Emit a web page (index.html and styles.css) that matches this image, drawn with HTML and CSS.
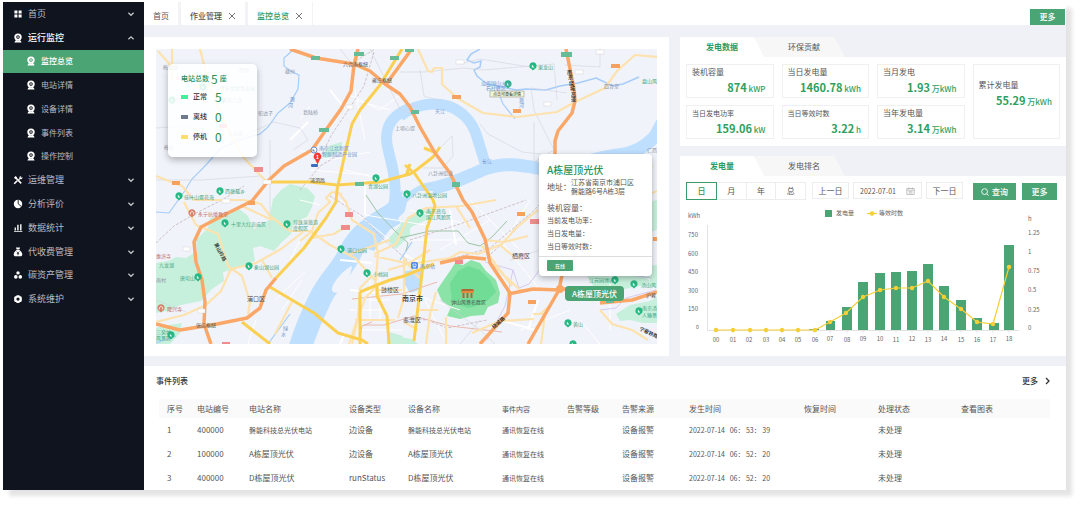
FILE: index.html
```html
<!DOCTYPE html>
<html lang="zh-CN">
<head>
<meta charset="utf-8">
<meta name="viewport" content="width=device-width, initial-scale=1">
<title>监控总览</title>
<link rel="stylesheet" href="styles.css">
</head>
<body>
<svg class="defs" aria-hidden="true">
  <symbol id="cam" viewBox="0 0 10 10"><path fill="currentColor" fill-rule="evenodd" d="M5 .4a3.7 3.7 0 1 1 0 7.4A3.7 3.7 0 0 1 5 .4zM5 2.3a1.8 1.8 0 1 0 0 3.6 1.8 1.8 0 0 0 0-3.6zM2.4 7.4h5.2l1 2.2H1.4z"/><circle cx="5" cy="4.1" r=".8" fill="currentColor"/></symbol>
  <symbol id="down" viewBox="0 0 8 8"><path d="M1.4 2.8 4 5.3l2.6-2.5" fill="none" stroke="currentColor" stroke-width="1.2"/></symbol>
  <symbol id="up" viewBox="0 0 8 8"><path d="M1.4 5.3 4 2.8l2.6 2.5" fill="none" stroke="currentColor" stroke-width="1.2"/></symbol>
  <symbol id="close" viewBox="0 0 8 8"><path d="M1 1l6 6M7 1 1 7" fill="none" stroke="currentColor" stroke-width="1"/></symbol>
  <symbol id="poi" viewBox="0 0 8 9"><path d="M4 .3a3.6 3.6 0 0 1 1.6 6.8L4 8.6 2.4 7.1A3.6 3.6 0 0 1 4 .3z" fill="#25b882"/><path d="M2.9 5.6V2.5l2.3 3.1z" fill="#fff"/></symbol>
  <symbol id="poi-red" viewBox="0 0 8 9"><path d="M4 .3a3.6 3.6 0 0 1 1.6 6.8L4 8.6 2.4 7.1A3.6 3.6 0 0 1 4 .3z" fill="#d9806b"/><path d="M2.4 5.5V3.6L4 2.3l1.6 1.3v1.9" fill="none" stroke="#fff" stroke-width=".8"/></symbol>
</svg>

<div class="app">
  <aside class="sidebar">
    <nav class="nav">
      <a class="item" href="#"><svg class="ico"><path fill="currentColor" d="M1.4 1.4h3v3h-3zM5.6 1.4h3v3h-3zM1.4 5.6h3v3h-3zM5.6 5.6h3v3h-3z"/></svg>首页<svg class="chev"><use href="#down"/></svg></a>
      <a class="item open" href="#"><svg class="ico"><use href="#cam"/></svg>运行监控<svg class="chev"><use href="#up"/></svg></a>
      <a class="item sub active" href="#"><svg class="ico"><use href="#cam"/></svg>监控总览</a>
      <a class="item sub" href="#"><svg class="ico"><use href="#cam"/></svg>电站详情</a>
      <a class="item sub" href="#"><svg class="ico"><use href="#cam"/></svg>设备详情</a>
      <a class="item sub" href="#"><svg class="ico"><use href="#cam"/></svg>事件列表</a>
      <a class="item sub" href="#"><svg class="ico"><use href="#cam"/></svg>操作控制</a>
      <a class="item" href="#"><svg class="ico"><path d="M2.2 2.2l6 6.2M1.2 8.8l3-3" fill="none" stroke="currentColor" stroke-width="1.6"/><path fill="currentColor" d="M1 2.8 2.6.9l1.6 1.6-1.6 1.7zM5.2 4.6l1.3-1.3a1.8 1.8 0 0 1 1.9-2.4L7.5 2l.7.8 1.2-.9a1.8 1.8 0 0 1-2.3 2.2L5.9 5.4z"/></svg>运维管理<svg class="chev"><use href="#down"/></svg></a>
      <a class="item" href="#"><svg class="ico"><circle cx="5" cy="5" r="4.2" fill="currentColor"/><path d="M5.2.6v4.2l3 2.6" fill="none" stroke="#10141f" stroke-width=".9"/></svg>分析评价<svg class="chev"><use href="#down"/></svg></a>
      <a class="item" href="#"><svg class="ico"><path fill="currentColor" d="M1 8.2h8.4V9H1zM1.6 4.6h1.3v3H1.6zM4.2 1.8h1.4v5.8H4.2zM7.1 1.2h1.4v6.4H7.1z"/></svg>数据统计<svg class="chev"><use href="#down"/></svg></a>
      <a class="item" href="#"><svg class="ico"><path fill="currentColor" d="M3 .6h4L6.4 2.6h-2.8zM3.6 3h2.8C8 4 9.3 5.8 9.3 7.4 9.3 8.600 8.600 9.200 7.400 9.200H2.600C1.400 9.200.7 8.600.7 7.400.7 5.800 2 4 3.600 3z"/><path d="M3.700 4.500 5 6l1.300-1.500M5 6v2.300M3.800 6.600h2.400" fill="none" stroke="#10141f" stroke-width=".7"/></svg>代收费管理<svg class="chev"><use href="#down"/></svg></a>
      <a class="item" href="#"><svg class="ico"><g fill="currentColor"><circle cx="5" cy="2.900" r="1.700"/><circle cx="2.800" cy="6.900" r="1.800"/><circle cx="7.300" cy="6.900" r="1.800"/></g></svg>碳资产管理<svg class="chev"><use href="#down"/></svg></a>
      <a class="item" href="#"><svg class="ico"><path fill="currentColor" fill-rule="evenodd" d="M3.700 1.200h2.600l.6 1 1.200.1 1 2-.6.800.6.900-1 2-1.200.1-.6 1H3.700l-.6-1-1.200-.1-1-2 .6-.9-.6-.8 1-2 1.200-.1zM5 3.500a1.600 1.600 0 1 0 0 3.200 1.600 1.600 0 0 0 0-3.200z"/></svg>系统维护<svg class="chev"><use href="#down"/></svg></a>
    </nav>
  </aside>

  <main class="main">
    <header class="topbar">
      <a class="tab" href="#">首页</a>
      <a class="tab" href="#">作业管理<svg class="x"><use href="#close"/></svg></a>
      <a class="tab current" href="#">监控总览<svg class="x"><use href="#close"/></svg></a>
      <button class="btn more-top" type="button">更多</button>
    </header>

    <div class="board">
      <section class="panel map-panel">
        <div class="map">
          <svg class="map-svg" viewBox="156 49 501 295" role="img" aria-label="南京市地图">
            <rect x="156" y="49" width="501" height="295" fill="#f0f3fa"/>
            <g fill="#c7f0dc">
              <path d="M273 199l8-9 9-6 17 4 8 8-3 11-5 10-13 5-3 12-9 8-8 9-14-5-7 2 2 13-20 8-12 3 1 9-12 8-11 12-20 4-14 6-11 2v-50l12-2 8-4 10 1 11-7-1-11 12-12 2-10 16-3 12-7 10 8 6 13 15-9z"/>
              <path d="M162 326l20-3-2 10-10 11h-14v-16zM323 153l8-8 11-3v5l-3 5-10 5-7 2zM387 240l12-13 11-8v16l-14 14zM395 240l8-22 13-8 16 1-3 8-16 7-11 9zM587 276l14-4 30-4 26-3v22l-20-1-20 5-22-2zM616 314l14-9 20-4 7-4v26l-14 0-13-3-10 1zM600 220l30-14 27-6v30l-30 8zM400 337l12 2 6 5h-20zM389 332l14 4-2 8h-14z"/>
            </g>
            <g fill="none" stroke="#bfdfff">
              <path d="M410 108C395 114 384 124 387 144c2 12 7 24 8 42 1 13-1 21-4 28" stroke-width="11"/>
              <path d="M400 116c16-12 33-14 48-10 15 5 25 17 29 31l8 26" stroke-width="11"/>
              <path d="M657 134c-10 12-24 20-40 21-28 4-55 15-80 13-17-3-34-6-52 1-20 8-36 17-60 21-12 5-22 14-33 25" stroke-width="13"/>
              <path d="M395 213c-17 10-35 20-44 38-9 20-22 29-31 48-8 16-14 30-20 49" stroke-width="23"/>
            </g>
            <path d="M640 151l17-32v22zM403 190c-16 14-22 20-37 32l-8 24 16 5 25-34zM405 271l16-2 2 10-4 11-9 3-6-10z" fill="#bfdfff"/>
            <path d="M352 266c-9 4-20 17-20 24 2 5 8 2 11-3 5-5 8-14 9-21zM407 202l12-11 14 0-2 14-15 8-14 10z" fill="#f0f3fa"/>
            <path d="M437 290l6-9 7-10 5-8 8 2 8-5 9 3 6 8 10 9 4 13-2 10-10 4-4 8-13 1-11 3-13-3 4-9-9-6z" fill="#8be3a8"/>
            <path d="M450 283l8-12 10-5 12 4 10 10 6 12-12 12-16 4-16-6z" fill="#62d98a" opacity=".65"/>
            <g fill="none" stroke="#a6cdfa" stroke-width="1.200">
              <path d="M293 50l-9 8 0 8 8 6 7 3-1 14-8 14-12 10-10 14-8 7-20 6-20 9-14 16-14 14-8 13-15 21-13-1"/>
              <path d="M480 49l-9 5-4 6 7 3 7-2-1 6-6 3 3 6 10 8 15 3 14 3 10-1 20 1 14-4 18-3 18-5 17 8 10-2 16-7" stroke-width="1.500"/>
              <path d="M495 84l8 20 12 15M156 343l20-7M400 260l12-18M268 344l22-30"/>
            </g>
            <g fill="none" stroke="#fff" stroke-width="1">
              <path d="M300 150l30 10 40-8M310 170l60 5M350 95l30 15 20-15M360 110l25-30M365 140l-10-50M355 100l35 10M300 200l20 5M275 300l30-28M282 310l20-30M290 260l10-20M340 200l50 40M365 215l60 10M345 170l40 10M410 210l60 15M410 240l60 0M400 290l60 20M425 300l20 40M440 250l50-30M500 240l40 50M470 200l60 60M530 200l-25 40M300 120l10-14M256 320l-8 24M370 300l20 0M350 310l36 0M370 280v40M380 270v50M358 330l45 0M520 330l50-20M570 220l80 60M580 320l20 24M610 250l0 80"/>
              <path d="M290 140l18-18M330 90l16 20M365 180v35M450 210l6 35M405 255l20 10M340 260l32 3M350 290l30 3M345 333l-5 11M500 320l35 10M538 300l-10 30" stroke-width="2"/>
            </g>
            <g fill="none" stroke="#d4d4de" stroke-width=".6">
              <path d="M156 128l30-2 20 8M225 147l12-8 15-7 22-10 26 6 8 12-15 10M400 72l24 0 40-4 20 2 70-6 3 36M534 122v40l20-12-20-40-3-22 36 5M340 49l12 15M460 64l20-5 50 8M370 49l30 60 17 8M440 148l12-12 1 20-10 12-20 0M600 49v18l-35-2M420 70l4 26 16 5M480 124l8 10 34 18 36 4M270 140l0 90M156 180l45 0 60-4M440 300l40 30 15 14M460 344l20-24M510 260l30-10M156 300l30 12"/>
            </g>
            <g fill="none" stroke="#c9b4b9" stroke-width=".8" stroke-dasharray="3 1.500">
              <path d="M352 63l23-14M374 52l-10 34-17 26-15 22-12 24M156 243l18-17 24-14 24-12 22-14M300 190l20-24 24-14M410 240l50-16 66-24M440 262l50-14 40-34M484 260l20-18 36-38M330 196l32 20 20 22 25 22M405 318l22 2 20 8 40-8"/>
            </g>
            <path d="M366 195l12 18 17 18 13 12-2 8M400 238l30-7 28 0 10 12 12 3 12-9 15-16" fill="none" stroke="#9ec3a4" stroke-width="1"/>
            <path d="M485 262l28 8 6 18 10-4 12-16 30-2 80 12M600 310l16-2 10-10 30-8M513 270l-8 36-18 34" fill="none" stroke="#cfc0ef" stroke-width=".8"/>
            <path d="M364 325l20 0 30-9 36 10 52 6M372 322l-10 4-2 10M352 299l30-3 20-2 35-12" fill="none" stroke="#eab2a4" stroke-width=".9"/>
            <g fill="none" stroke="#fde2ae" stroke-width="2.200" stroke-linejoin="round">
              <path d="M200 49l9 36 16 38 18 34 20 21 5 4M158 51l14 16v14M172 49v30M156 176l26 10 12 14 50 0 17 4 9 12 20 15 20 0 20 14 25 13 20 22 5 20M184 202l12 23 22 9 10 32 14 10 8 26-2 12M156 322l28-7 22-10 15-14 10-22 25-6 25-14 22-17M300 241l12-10 6-18 12-11-4-4 6-6 10 2M242 206l30 14M418 49l10 22 4 1 2-4 8 0v16l15 14 26 15 34 4 40-5 18-10 30-14 12-17 18-16 24 2M336 190l10 12 6 18 22 14 4 20-3 34-10 10-10 28-8 24M312 238l22-4 14-9M374 254l22-10 12-26 18-10 36-2 34-6M374 256l36 8 40-6 10-6 18 2 24-10 14-16 22-18M490 262l30 28 18 0M350 254l40-14M372 276l-12 12-2 30-6 26M355 320h40M388 270l20-6 22-14M436 292l-6 22-4 30M446 317v27M420 310l18 0M404 258l0 40-6 20M378 290h24M484 240l20 2 24-6M482 246l30 40M456 206l14 22M600 310l12 14 20 6 16 10M533 314l12 0-4 30M540 314l12-10M472 333l28-12 34-2M652 166l-6 8M293 300l-18 34M262 260l10 18M404 322l14 8M500 245l12 10M642 197l15-6M405 260l14 18"/>
            </g>
            <g fill="none" stroke="#fbd052" stroke-width="3" stroke-linejoin="round">
              <path d="M402 49l-22 36-20 25-8 14-8 34-7 32-1 12-10 16-22 30-28 30"/>
              <path d="M268 182l42 0 27 3 43-3 30-8 5-3 18-14 7-10M434 152l-10-4M405 165l10 9 18 26 2 6-8 22-5 45-4 34-4 34M406 176l4-12M242 322l28 22M270 287l44 26 24 20 24 7 6 4M360 292v52M360 292l17-7 13-5 14-4 30-12M377 284v12l10 20 2 28"/>
            </g>
            <g fill="none" stroke="#fba768" stroke-width="3.500" stroke-linejoin="round">
              <path d="M290 49l26 9 38 6 16 7 15 13 15 10 10 13 10 20 15 26 15 20 13 27 9 12 13 27 5 24 20 30-2 20-28 31"/>
              <path d="M358 49l-4 16-3 26-10 18-18 25-11 16-28 16-15 14-17 21-24 12-27 14-7 15 2 20 6 18 3 22-1 22 7 20M156 324l24 6 37-6 30-6 13-10 6-18 10-12M387 83l24-33"/>
              <path d="M566 49l8 40 1 12-3 12-14 18-3 10v20M563 270l-4 20-31 54M508 294l25-5 27 1 10-2M600 303l32-3 25-8M440 263l26-6 20 2"/>
            </g>
            <circle cx="560" cy="289" r="4" fill="#fba768"/>

            <g class="badges">
              <g fill="#66bc96"><rect x="311" y="56" width="9" height="4"/><rect x="354" y="52" width="10" height="4"/><rect x="390" y="56" width="9" height="4"/><rect x="405" y="49" width="9" height="3"/><rect x="319" y="128" width="10" height="4"/><rect x="355" y="182" width="9" height="4"/><rect x="411" y="110" width="8" height="4"/><rect x="452" y="182" width="8" height="5"/><rect x="561" y="52" width="11" height="5"/><rect x="606" y="299" width="8" height="4"/></g>
              <g fill="#f28b8b"><rect x="254" y="167" width="9" height="5"/><rect x="345" y="212" width="8" height="5"/><rect x="341" y="225" width="9" height="5"/><rect x="219" y="124" width="8" height="4"/><rect x="222" y="342" width="8" height="2"/><rect x="530" y="219" width="9" height="5"/><rect x="455" y="260" width="8" height="4"/></g>
              <g fill="#f6a25e"><rect x="172" y="181" width="8" height="4"/><rect x="248" y="201" width="7" height="4"/><rect x="452" y="95" width="9" height="4"/><rect x="513" y="109" width="8" height="4"/><rect x="611" y="64" width="9" height="4"/><rect x="517" y="212" width="8" height="4"/><rect x="528" y="300" width="8" height="4"/><rect x="653" y="237" width="4" height="4"/></g>
              <g fill="#fff" stroke="#ccc" stroke-width=".4"><rect x="263" y="180" width="8" height="4"/><rect x="222" y="199" width="8" height="4"/><rect x="346" y="105" width="7" height="4"/><rect x="183" y="247" width="7" height="4"/><rect x="198" y="309" width="7" height="4"/><rect x="456" y="60" width="8" height="4"/><rect x="575" y="70" width="8" height="4"/><rect x="544" y="102" width="7" height="4"/><rect x="596" y="50" width="8" height="4"/></g>
            </g>

            <g class="pois">
              <use href="#poi" x="175" y="192" width="8" height="9"/><use href="#poi" x="216" y="187" width="8" height="9"/><use href="#poi" x="221" y="219" width="8" height="9"/><use href="#poi" x="283" y="220" width="8" height="9"/><use href="#poi" x="245" y="262" width="8" height="9"/><use href="#poi" x="194" y="273" width="8" height="9"/><use href="#poi" x="167" y="331" width="8" height="9"/><use href="#poi" x="337" y="245" width="8" height="9"/><use href="#poi" x="363" y="269" width="8" height="9"/><use href="#poi" x="372" y="174" width="8" height="9"/><use href="#poi" x="403" y="190" width="8" height="9"/><use href="#poi" x="416" y="209" width="8" height="9"/><use href="#poi" x="529" y="62" width="8" height="9"/><use href="#poi" x="504" y="80" width="8" height="9"/><use href="#poi" x="611" y="276" width="8" height="9"/><use href="#poi" x="630" y="280" width="8" height="9"/><use href="#poi" x="635" y="307" width="8" height="9"/><use href="#poi" x="564" y="319" width="8" height="9"/><use href="#poi" x="569" y="340" width="8" height="9"/><use href="#poi" x="199" y="83" width="8" height="9"/><use href="#poi" x="168" y="96" width="8" height="9"/>
              <use href="#poi-red" x="188" y="209" width="8" height="9"/><use href="#poi-red" x="157" y="304" width="8" height="9"/>
              <rect x="411" y="262" width="7" height="7" rx="2" fill="#4f86e8"/><path d="M413 264h3v2.500h-3zM413 268l3 0" fill="none" stroke="#fff" stroke-width=".7"/>
              <circle cx="314" cy="150" r="3" fill="#fff" stroke="#6f8fc9"/><path d="M312.500 151.500v-3l3 3z" fill="#6f8fc9"/>
              <rect x="311" y="164" width="7" height="3" rx="1" fill="#3d6cb8"/>
              <path d="M317.500 152.500a4 4 0 0 1 2.400 7.100l-2.400 5-2.400-5a4 4 0 0 1 2.400-7.100z" fill="#ee3b34"/>
              <path d="M461 291h13l-1-2h-11zM462.500 292h2v6h-2zM466.500 292h2v6h-2zM470.500 292h2v6h-2z" fill="#a96a3a"/><rect x="461" y="291" width="13" height="2" fill="#e68a3c"/>
            </g>
            <text class="marker-no" x="317.500" y="158.500">1</text>

            <g class="lbl green">
              <text x="184" y="199">佳叶山露花海</text><text x="225" y="193">西塘蔓乡</text><text x="231" y="226">十里大红贡庙区</text><text x="293" y="224">珍珠泉旅游</text><text x="293" y="230">度假区</text><text x="254" y="269">象山湖公园</text><text x="159" y="267">九龙湖</text><text x="180" y="280">唐坨山</text><text x="156" y="334">三癸坊</text><text x="156" y="340">风景区</text><text x="347" y="252">浦口公园</text><text x="373" y="276">小桃园</text><text x="368" y="188">青湖公园</text><text x="412" y="197">八卦洲湿地公园</text><text x="426" y="213">南京燕岛</text><text x="426" y="219">滨江风貌区</text><text x="538" y="69">東龙山</text><text x="642" y="83">盘山风</text><text x="589" y="282">江苏园博园</text><text x="641" y="287">汤山风</text><text x="642" y="310">南京汤</text><text x="642" y="317">人猿景</text><text x="573" y="326">黄山</text><text x="220" y="90">青年文化生态园</text><text x="222" y="102">南京六合</text>
            </g>
            <g class="lbl red"><text x="198" y="216">永宁抗倭教堂</text><text x="156" y="258">惠济寺</text><text x="167" y="311">隆兴寺</text></g>
            <g class="lbl blue"><text x="481" y="85">瓜埠国山火山</text><text x="486" y="90">石柱景区</text><text x="435" y="113">夹江</text><text x="482" y="163">长江</text><text x="420" y="268">南京站</text><text x="319" y="150">南京江北新区</text><text x="322" y="156">智能制造产业园</text><text x="519" y="102">滁</text><text x="519" y="107">河</text><text x="290" y="101">滁</text><text x="288" y="107">河</text><text x="283" y="330">绿</text><text x="281" y="336">水</text></g>
            <g class="lbl gray"><text x="285" y="73">雄州</text><text x="303" y="114">葛陆桥</text><text x="258" y="115">驼达子</text><text x="163" y="69">梅龙镇</text><text x="239" y="72">西岗</text><text x="164" y="149">梅庄</text><text x="395" y="130">上坝心堤</text><text x="428" y="175">八卦洲街道</text><text x="604" y="88">四青堂</text><text x="647" y="152">仁西</text><text x="156" y="282">南村</text><text x="228" y="135">三义庄</text></g>
            <g class="lbl dark"><text x="343" y="66">六合南枢纽</text><text x="372" y="82">雍庄枢纽</text><text x="310" y="182">浦泗路</text><text x="196" y="327">张店枢纽</text><text x="451" y="304">钟山风景名胜区</text><text x="646" y="297">沪蓉</text></g>
            <g class="lbl road"><text transform="translate(214 244) rotate(62)">黄山岭路</text><text transform="translate(494 329) rotate(-42)">绕城路</text><text transform="translate(639 330) rotate(25)">宁蓉铁路</text><text x="567" y="74">南</text><text x="568" y="79">京</text><text x="569" y="85">绕</text><text x="570" y="90">城</text><text x="571" y="96">高</text><text x="571" y="101">速</text></g>
            <g class="lbl city"><text x="247" y="301">浦口区</text><text x="381" y="292">鼓楼区</text><text x="403" y="322">秦淮区</text><text x="512" y="258">栖霞区</text></g>
            <text class="lbl capital" x="402" y="301">南京市</text>
            <rect x="490" y="91" width="34" height="6" fill="#f6f5d5" stroke="#888" stroke-width=".5"/>
            <text class="lbl hint" x="493" y="96">点击可查看详情</text>
          </svg>

          <div class="legend">
            <p class="legend-title">电站总数<b>5</b>座</p>
            <p class="legend-row"><i class="sw ok"></i><span>正常</span><b>5</b></p>
            <p class="legend-row"><i class="sw off"></i><span>离线</span><b>0</b></p>
            <p class="legend-row"><i class="sw stop"></i><span>停机</span><b>0</b></p>
          </div>

          <article class="popup">
            <h3>A栋屋顶光伏</h3>
            <p class="addr"><span>地址：</span><small>江苏省南京市浦口区<br>磐能路6号A栋3层</small></p>
            <p class="line big">装机容量：</p>
            <p class="line">当前发电功率：</p>
            <p class="line">当日发电量：</p>
            <p class="line">当日等效时数：</p>
            <footer><span class="status">在线</span></footer>
          </article>
          <span class="place">A栋屋顶光伏</span>
        </div>
      </section>

      <div class="side">
        <section class="stats">
          <div class="ptabs"><button class="ptab on" type="button"><span>发电数据</span></button><button class="ptab" type="button"><span>环保贡献</span></button></div>
          <div class="cards">
            <div class="card"><h4>装机容量</h4><p><b>874</b> kWP</p></div>
            <div class="card"><h4>当日发电量</h4><p><b>1460.78</b> kWh</p></div>
            <div class="card"><h4>当月发电</h4><p><b>1.93</b> 万kWh</p></div>
            <div class="card total"><h4>累计发电量</h4><p><b>55.29</b> 万kWh</p></div>
            <div class="card"><h4 class="s">当日发电功率</h4><p><b>159.06</b> kW</p></div>
            <div class="card"><h4 class="s">当日等效时数</h4><p><b>3.22</b> h</p></div>
            <div class="card"><h4>当年发电量</h4><p><b>3.14</b> 万kWh</p></div>
          </div>
        </section>

        <section class="output">
          <div class="ptabs"><button class="ptab on" type="button"><span>发电量</span></button><button class="ptab" type="button"><span>发电排名</span></button></div>
          <div class="tools">
            <div class="seg"><button class="on" type="button">日</button><button type="button">月</button><button type="button">年</button><button type="button">总</button></div>
            <button class="ghost" type="button">上一日</button>
            <label class="date"><input type="text" value="2022-07-01" aria-label="日期"><svg class="cal"><path d="M.8 1.500h7.400v6H.8zM.8 3.200h7.400M2.700.5v1.800M6.300.5v1.800M2.500 4.700h4M2.500 6h4" fill="none" stroke="#aaa" stroke-width=".7"/></svg></label>
            <button class="ghost" type="button">下一日</button>
            <button class="btn query" type="button"><svg class="mag"><circle cx="3.600" cy="3.600" r="2.900" fill="none" stroke="#fff" stroke-width=".9"/><path d="M5.700 5.700 7.600 7.600" stroke="#fff" stroke-width=".9"/></svg>查询</button>
            <button class="btn" type="button">更多</button>
          </div>
          <svg class="chart" viewBox="680 204 386 144" role="img" aria-label="发电量与等效时数">
            <path d="M707.500 225v105.500H1019M733 330v3M750 330v3M766 330v3M782 330v3M798 330v3M814 330v3M830 330v3M847 330v3M863 330v3M880 330v3M896 330v3M912 330v3M928 330v3M944 330v3M961 330v3M977 330v3M993 330v3M1009 330v3" fill="none" stroke="#e3e3e3"/>
            <g fill="#4ba474">
              <rect x="809" y="329" width="10" height="1"/><rect x="826" y="321" width="9" height="9"/><rect x="842" y="307" width="10" height="23"/><rect x="858" y="282" width="10" height="48"/><rect x="875" y="273" width="10" height="57"/><rect x="891" y="272" width="10" height="58"/><rect x="907" y="271" width="10" height="59"/><rect x="923" y="264" width="10" height="66"/><rect x="939" y="286" width="10" height="44"/><rect x="956" y="300" width="10" height="30"/><rect x="972" y="318" width="10" height="12"/><rect x="989" y="323" width="10" height="7"/><rect x="1004" y="245" width="10" height="85"/>
            </g>
            <g fill="none" stroke="#f5cf35" stroke-width="1.200"><path d="M716 330h99l15-8 16-9 17-16 17-7 16-2h16l16-7 16 16 17 12 16 13 16 2 16-57"/><path d="M867 213.500h10"/></g>
            <g fill="#f5cf35">
              <circle cx="716" cy="330" r="2.200"/><circle cx="733" cy="330" r="2.200"/><circle cx="750" cy="330" r="2.200"/><circle cx="766" cy="330" r="2.200"/><circle cx="782" cy="330" r="2.200"/><circle cx="798" cy="330" r="2.200"/><circle cx="815" cy="330" r="2.200"/><circle cx="830" cy="322" r="2.200"/><circle cx="846" cy="313" r="2.200"/><circle cx="863" cy="297" r="2.200"/><circle cx="880" cy="290" r="2.200"/><circle cx="896" cy="288" r="2.200"/><circle cx="912" cy="288" r="2.200"/><circle cx="928" cy="281" r="2.200"/><circle cx="944" cy="297" r="2.200"/><circle cx="961" cy="309" r="2.200"/><circle cx="977" cy="322" r="2.200"/><circle cx="993" cy="324" r="2.200"/><circle cx="1009" cy="267" r="2.200"/><circle cx="872" cy="213.500" r="2.200"/>
            </g>
            <rect x="825" y="210" width="7" height="7" fill="#4ba474"/>
            <g class="axis">
              <text x="836" y="215">发电量</text><text x="879" y="215">等效时数</text>
              <text x="688" y="218">kWh</text><text x="688" y="237">750</text><text x="688" y="256">600</text><text x="688" y="274">450</text><text x="688" y="293">300</text><text x="688" y="311">150</text><text class="zero" x="696" y="329">0</text>
              <text x="1028" y="221">h</text><text x="1028" y="235">1.25</text><text x="1028" y="254">1</text><text x="1028" y="273">0.75</text><text x="1028" y="292">0.5</text><text x="1028" y="312">0.25</text><text x="1028" y="330">0</text>
            </g>
            <g class="axis mid">
              <text x="716" y="342">00</text><text x="733" y="342">01</text><text x="749" y="342">02</text><text x="766" y="342">03</text><text x="782" y="342">04</text><text x="798" y="342">05</text><text x="815" y="342">06</text><text x="830" y="341">07</text><text x="847" y="342">08</text><text x="863" y="341">09</text><text x="880" y="341">10</text><text x="896" y="342">11</text><text x="912" y="341">12</text><text x="928" y="342">13</text><text x="944" y="341">14</text><text x="961" y="342">15</text><text x="977" y="342">16</text><text x="993" y="342">17</text><text x="1009" y="341">18</text>
            </g>
          </svg>
        </section>
      </div>
    </div>

    <section class="events">
      <header><h2>事件列表</h2><a href="#">更多<svg class="go"><path d="M2 1l3 3-3 3" fill="none" stroke="currentColor" stroke-width="1.300"/></svg></a></header>
      <table>
        <colgroup><col class="c1"><col class="c2"><col class="c3"><col class="c4"><col class="c5"><col class="c6"><col class="c7"><col class="c8"><col class="c9"><col class="c10"><col class="c11"><col class="c12"></colgroup>
        <thead><tr><th>序号</th><th>电站编号</th><th>电站名称</th><th>设备类型</th><th>设备名称</th><th class="s">事件内容</th><th>告警等级</th><th>告警来源</th><th>发生时间</th><th>恢复时间</th><th>处理状态</th><th>查看图表</th></tr></thead>
        <tbody>
          <tr><td>1</td><td>400000</td><td class="s">磐能科技总光伏电站</td><td>边设备</td><td class="s">磐能科技总光伏电站</td><td class="s">通讯恢复在线</td><td></td><td>设备报警</td><td class="s">2022-07-14&nbsp;&nbsp; 06： 53： 39</td><td></td><td>未处理</td><td></td></tr>
          <tr><td>2</td><td>100000</td><td>A栋屋顶光伏</td><td>边设备</td><td>A栋屋顶光伏</td><td class="s">通讯恢复在线</td><td></td><td>设备报警</td><td class="s">2022-07-14&nbsp;&nbsp; 06： 52： 20</td><td></td><td>未处理</td><td></td></tr>
          <tr><td>3</td><td>400000</td><td>D栋屋顶光伏</td><td>runStatus</td><td>D栋屋顶光伏</td><td class="s">通讯恢复在线</td><td></td><td>设备报警</td><td class="s">2022-07-14&nbsp;&nbsp; 06： 52： 20</td><td></td><td>未处理</td><td></td></tr>
        </tbody>
      </table>
    </section>
  </main>
</div>
</body>
</html>
```

FILE: styles.css
```css
* { box-sizing: border-box; }
body {
  margin: 0;
  padding: 2px 14px 16px 3px;
  background: #fff;
  color: #555;
  font: 8px/12px "Noto Sans CJK SC", "Noto Sans", sans-serif;
}
h2, h3, h4, p { margin: 0; font-weight: 400; font-size: inherit; }
a { color: inherit; text-decoration: none; }
button, input { font: inherit; color: inherit; margin: 0; padding: 0; border: 0; background: none; }
.defs { position: absolute; width: 0; height: 0; }

.app { display: flex; box-shadow: 6px 6px 4px rgba(0, 0, 0, .11); }

/* sidebar */
.sidebar { flex: 0 0 141px; background: #10141f; }
.nav { display: grid; grid-auto-rows: 1fr; min-height: 309px; }
.item { display: flex; align-items: center; gap: 5px; padding: 0 9px 0 10px; color: #b9bcc2; font-size: 9px; }
.item .ico { width: 10px; height: 10px; color: #fff; }
.item .chev { width: 8px; height: 8px; margin-left: auto; color: #c4c6ca; }
.item.open { color: #fff; font-weight: 500; }
.item.sub { padding-left: 23px; font-size: 8px; }
.item.active { background: #4ba474; color: #fff; font-weight: 500; }

/* top bar */
.main { flex: 1; min-width: 0; background: #f0f1f6; }
.topbar { display: flex; align-items: stretch; height: 23px; background: #fff; }
.tab { display: flex; align-items: center; gap: 6px; padding: 5px 9px 0; border-right: 3px solid #f3f3f5; }
.tab:nth-child(2), .tab:nth-child(3) { font-weight: 500; }
.tab.current { color: #2f9a5c; border-right-width: 1px; }
.tab .x { width: 8px; height: 8px; color: #777; }
.btn { background: #4ba474; color: #fff; font-weight: 500; height: 17px; min-width: 35px; }
.more-top { margin: 7px 1px 0 auto; height: 16px; }

/* board */
.board { display: grid; grid-template-columns: 525fr 386fr; gap: 11px; padding: 12px 0 10px; }
.panel { background: #fff; padding: 12px; }
.map { position: relative; }
.map-svg { display: block; width: 100%; }
.side { display: flex; flex-direction: column; gap: 10px; }
.stats, .output { background: linear-gradient(#f0f1f6 20px, #fff 20px); }
.output { flex: 1; }

/* map text */
.lbl { font-size: 5px; }
.green { fill: #3fa583; }
.red { fill: #c4705f; }
.blue { fill: #6d94cc; }
.gray { fill: #8d93a3; }
.dark { fill: #555; }
.road { fill: #222; font-weight: 500; }
.city { fill: #555; font-size: 6px; }
.capital { fill: #333; font-size: 7px; font-weight: 500; }
.hint { fill: #333; font-size: 4px; }
.marker-no { fill: #fff; font-size: 5px; font-weight: 700; text-anchor: middle; }

/* map overlays */
.legend {
  position: absolute; left: 12px; top: 15px; width: 89px; padding: 7px 13px 11px;
  display: flex; flex-direction: column; gap: 1px;
  background: rgba(255, 255, 255, .87); border-radius: 5px;
  box-shadow: 0 3px 7px rgba(0, 0, 0, .28); color: #333; font-size: 7px;
}
.legend b { font-weight: 400; color: #2c8f52; }
.legend-title { display: flex; align-items: center; color: #2c8f52; font-weight: 500; line-height: 15px; }
.legend-title b { font-size: 12px; margin: 0 2px; }
.legend-row { display: flex; align-items: center; line-height: 19px; font-weight: 500; }
.legend-row b { font-size: 12px; margin-left: 8px; }
.sw { width: 7px; height: 4px; margin-right: 5px; }
.sw.ok { background: #3df29a; }
.sw.off { background: #6f7a8d; }
.sw.stop { background: #fbdc78; }

.popup {
  position: absolute; left: 383px; top: 105px; width: 113px;
  background: #fff; border-radius: 4px; box-shadow: 0 2px 6px rgba(0, 0, 0, .3);
  padding: 8px 0 5px; font-size: 7px; line-height: 13px;
}
.popup h3, .popup p { padding: 0 8px; }
.popup h3 { color: #2b9355; font-size: 10px; font-weight: 500; line-height: 15px; }
.addr { display: flex; align-items: center; font-size: 8px; line-height: 20px; margin-bottom: 4px; white-space: nowrap; }
.addr small { font-size: 7px; line-height: 9px; }
.popup .big { font-size: 8px; }
.popup footer { display: flex; border-top: 1px solid #ddd; margin-top: 3px; padding: 3px 8px 0; }
.status { background: #4ba474; color: #fff; font-size: 5px; font-weight: 500; line-height: 11px; padding: 0 8px; border-radius: 1px; }
.place {
  position: absolute; left: 409px; top: 237px; padding: 0 7px; border-radius: 4px;
  background: #4ba474; color: #fff; font-weight: 500; line-height: 15px; white-space: nowrap;
}

/* panel tabs */
.ptabs { display: flex; height: 20px; }
.ptab { position: relative; width: 84px; background: #f7f7f7; clip-path: polygon(0 0, 88% 0, 100% 100%, 0 100%); }
.ptab + .ptab { width: 90px; margin-left: -9px; padding-left: 8px; }
.ptab.on { z-index: 1; background: #fff; color: #2f9a5c; font-weight: 700; }

/* statistic cards */
.cards { display: grid; grid-template-columns: repeat(4, 1fr); grid-auto-rows: 34px; gap: 7px 8px; padding: 7px 6px; }
.card { border: 1px solid #f0f0f0; padding: 0 7px 0 5px; line-height: 14px; }
.card h4.s { font-size: 7px; }
.card p { color: #2f9f5e; font-weight: 500; text-align: right; line-height: 17px; white-space: nowrap; }
.card b { font-size: 11px; font-weight: 700; }
.total { grid-column: 4; grid-row: 1 / 3; padding-top: 13px; }

/* chart tools */
.tools { display: flex; align-items: flex-start; gap: 4px; padding: 6px 9px 4px 6px; }
.seg { display: flex; flex: 0 0 120px; margin-right: 2px; }
.seg button { flex: 1; height: 18px; border: 1px solid #ededed; border-left-width: 0; }
.seg .on { border: 1px solid #3b9a67; color: #2f9a5c; font-weight: 500; }
.ghost { flex: 0 0 37px; height: 17px; border: 1px solid #ededed; }
.date { flex: 1; min-width: 0; display: flex; align-items: center; justify-content: space-between; height: 17px; padding: 0 6px; border: 1px solid #ededed; }
.date input { width: 44px; font-size: 7px; }
.cal { width: 9px; height: 8px; }
.tools .btn { flex: 0 0 35px; margin: 1px 0 0 2px; }
.tools .query { display: flex; align-items: center; justify-content: center; gap: 3px; flex-basis: 43px; margin-left: 6px; }
.mag { width: 8px; height: 8px; }
.chart { display: block; width: 100%; }
.axis { font-size: 6px; fill: #666; }
.zero { font-size: 5px; }
.mid { text-anchor: middle; }

/* events */
.events { background: #fff; padding: 9px 14px 0 12px; min-height: 124px; }
.events header { display: flex; justify-content: space-between; padding-bottom: 12px; color: #333; }
.events h2 { font-weight: 500; }
.events header a { display: flex; align-items: center; gap: 6px; font-weight: 500; }
.go { width: 8px; height: 8px; }
.events table { width: calc(100% - 5px); margin-left: 3px; border-collapse: collapse; table-layout: fixed; }
.events th, .events td { height: 24px; padding: 0; text-align: left; font-weight: 400; white-space: nowrap; }
.events th { height: 19px; background: #fafafa; }
.events th:first-child, .events td:first-child { padding-left: 8px; }
.events .s { font-size: 7px; }
.c1 { width: 38px; } .c2 { width: 52px; } .c3 { width: 100px; } .c4 { width: 59px; }
.c5 { width: 94px; } .c6 { width: 65px; } .c7 { width: 55px; } .c8 { width: 67px; }
.c9 { width: 115px; } .c10 { width: 74px; } .c11 { width: 83px; }
```
